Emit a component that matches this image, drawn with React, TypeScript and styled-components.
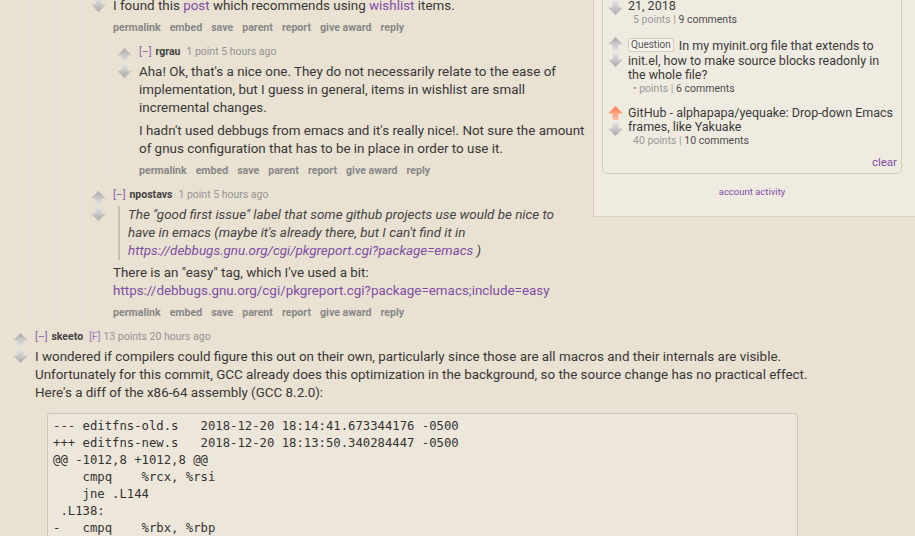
import React from 'react';
import styled, { createGlobalStyle } from 'styled-components';

const SANS = `Roboto, "Noto Sans", "Liberation Sans", sans-serif`;
const MONO = `"DejaVu Sans Mono", "Liberation Mono", monospace`;

const GlobalStyle = createGlobalStyle`
  html, body {
    margin: 0;
    padding: 0;
    background: #e9e1d1;
  }
  body {
    overflow: hidden;
    font-family: ${SANS};
    color: #383838;
  }
`;

type Dir = 'up' | 'down';
type Tone = 'gray' | 'orange';

function Arrow({ dir, tone = 'gray' }: { dir: Dir; tone?: Tone }) {
  const id = `arrow-${dir}-${tone}`;
  const [dark, light] = tone === 'orange' ? ['#ff7d50', '#ffc2aa'] : ['#a9a9a9', '#e4e4e4'];
  const d =
    dir === 'up'
      ? 'M7.5 0 L15 7.5 L10.5 7.5 L10.5 14 L4.5 14 L4.5 7.5 L0 7.5 Z'
      : 'M4.5 0 L10.5 0 L10.5 6.5 L15 6.5 L7.5 14 L0 6.5 L4.5 6.5 Z';
  return (
    <svg width="15" height="14" viewBox="0 0 15 14">
      <defs>
        <linearGradient id={id} x1="0" y1="0" x2="0" y2="1">
          <stop offset="0" stopColor={dir === 'up' ? dark : light} />
          <stop offset="1" stopColor={dir === 'up' ? light : dark} />
        </linearGradient>
      </defs>
      <path d={d} fill={`url(#${id})`} />
    </svg>
  );
}

const Viewport = styled.div`
  height: 536px;
  overflow: hidden;
`;

/* the page is scrolled: the top of the thread sits above the window */
const Scroller = styled.div`
  margin-top: -21px;
`;

const TopRow = styled.div`
  display: flex;
  align-items: flex-start;
`;

const Main = styled.div`
  flex: 1;
  min-width: 0;
  padding-left: 10px;
`;

const Thread = styled.div`
  margin-left: 19px;
  padding-left: 6px;
  border-left: 1px dotted #ddf;
`;

const Child = styled(Thread)`
  margin-top: 10px;
`;

const CommentBox = styled.div`
  & + & {
    margin-top: 10px;
  }
`;

const CommentRow = styled.div`
  display: flex;
`;

const Midcol = styled.div`
  width: 25px;
  flex: 0 0 25px;
  box-sizing: border-box;
  padding: 3px 0 0 3px;
  display: flex;
  flex-direction: column;
  gap: 2px;
`;

const Entry = styled.div`
  flex: 1;
  min-width: 0;
`;

const Tagline = styled.div`
  font-size: 10.5px;
  line-height: 14px;
  color: #959595;
  white-space: nowrap;
`;

const Expand = styled.span`
  color: #8563a6;
  margin-right: 4px;
`;

const Author = styled.span`
  font-weight: 700;
  color: #444;
  margin-right: 6px;
`;

const Flag = styled.span`
  color: #9b80b3;
  margin-right: 3px;
`;

const Md = styled.div`
  margin-top: 4px;
  font-size: 13.4px;
  line-height: 18px;
  max-width: 775px;
`;

const P = styled.p`
  margin: 0;
  white-space: nowrap;
  & + & {
    margin-top: 5px;
  }
`;

const A = styled.a`
  color: #7f4ea6;
  text-decoration: none;
`;

const Quote = styled.blockquote`
  margin: 0 0 4px 5px;
  padding-left: 8px;
  border-left: 2px solid #c9c1b0;
  font-style: italic;
  color: #444;
  white-space: nowrap;
`;

const Pre = styled.pre`
  margin: 11px 12px 0 12px;
  padding: 4px 5px;
  background: #ede6da;
  border: 1px solid #c9c5bd;
  border-radius: 3px;
  font-family: ${MONO};
  font-size: 12.25px;
  line-height: 17px;
  color: #333;
`;

const Actions = styled.ul`
  display: flex;
  gap: 9px;
  list-style: none;
  margin: 6px 0 0;
  padding: 0;
  font-size: 10.6px;
  line-height: 14px;
  font-weight: 700;
  color: #888;
`;

const Sidebar = styled.aside`
  flex: 0 0 322px;
  box-sizing: border-box;
  background: #f0ebe1;
  border-left: 1px solid #d9d0bf;
  border-bottom: 1px solid #d9d0bf;
  padding: 0 13px 17px 8px;
`;

const RecentBox = styled.div`
  border: 1px solid #d6ccba;
  border-radius: 5px;
  padding: 5px 4px 4px 5px;
`;

const Item = styled.div`
  display: flex;
  & + & {
    margin-top: 10px;
  }
`;

const ItemArrows = styled.div`
  flex: 0 0 20px;
  display: flex;
  flex-direction: column;
  gap: 2px;
`;

const ItemBody = styled.div`
  flex: 1;
`;

const ItemTitle = styled.div`
  font-size: 12.5px;
  line-height: 14px;
  color: #3a3a3a;
  white-space: nowrap;
`;

const Flair = styled.span`
  display: inline-block;
  font-size: 10px;
  line-height: 12px;
  padding: 0 2px;
  margin: 1px 5px 2px 0;
  border: 1px solid #d4ccbd;
  border-radius: 2px;
  background: #f7f3ec;
  color: #555;
  vertical-align: 2px;
`;

const ItemMeta = styled.div`
  padding-left: 5px;
  font-size: 10.5px;
  line-height: 14px;
  color: #999;
`;

const Count = styled.span`
  color: #4e4e4e;
`;

const Clear = styled.div`
  margin-top: 7px;
  text-align: right;
  font-size: 11.5px;
  line-height: 14px;
  color: #7f4ea6;
`;

const Activity = styled.div`
  margin-top: 11px;
  text-align: center;
  font-size: 9.5px;
  line-height: 14px;
  color: #7f4ea6;
`;

const SkeetoWrap = styled.div`
  margin-top: 10px;
  padding-left: 10px;
`;

const ACTIONS = ['permalink', 'embed', 'save', 'parent', 'report', 'give award', 'reply'];

function Comment({
  author,
  meta,
  flag,
  children,
  replies,
}: {
  author: string;
  meta: string;
  flag?: string;
  children: React.ReactNode;
  replies?: React.ReactNode;
}) {
  return (
    <CommentBox>
      <CommentRow>
        <Midcol>
          <Arrow dir="up" />
          <Arrow dir="down" />
        </Midcol>
        <Entry>
          <Tagline>
            <Expand>[–]</Expand>
            <Author>{author}</Author>
            {flag && <Flag>{flag}</Flag>}
            {meta}
          </Tagline>
          <Md>{children}</Md>
          <Actions>
            {ACTIONS.map((a) => (
              <li key={a}>{a}</li>
            ))}
          </Actions>
        </Entry>
      </CommentRow>
      {replies && <Child>{replies}</Child>}
    </CommentBox>
  );
}

type Recent = {
  title: React.ReactNode;
  flair?: string;
  points: string;
  comments: string;
  voted?: boolean;
};

const RECENT: Recent[] = [
  {
    title: (
      <>
        Emacs news for the week ending December
        <br />
        21, 2018
      </>
    ),
    points: '5 points',
    comments: '9 comments',
  },
  {
    flair: 'Question',
    title: (
      <>
        In my myinit.org file that extends to
        <br />
        init.el, how to make source blocks readonly in
        <br />
        the whole file?
      </>
    ),
    points: '• points',
    comments: '6 comments',
  },
  {
    title: (
      <>
        GitHub - alphapapa/yequake: Drop-down Emacs
        <br />
        frames, like Yakuake
      </>
    ),
    points: '40 points',
    comments: '10 comments',
    voted: true,
  },
];

export default function App() {
  return (
    <Viewport>
      <GlobalStyle />
      <Scroller>
        <TopRow>
          <Main>
            <Thread>
              <Thread>
                <Thread>
                  <Comment
                    author="npostavs"
                    meta="2 points 6 hours ago"
                    replies={
                      <Comment author="rgrau" meta="1 point 5 hours ago">
                        <P>
                          Aha! Ok, that's a nice one. They do not necessarily relate to the ease of
                          <br />
                          implementation, but I guess in general, items in wishlist are small
                          <br />
                          incremental changes.
                        </P>
                        <P>
                          I hadn't used debbugs from emacs and it's really nice!. Not sure the amount
                          <br />
                          of gnus configuration that has to be in place in order to use it.
                        </P>
                      </Comment>
                    }
                  >
                    <P>
                      I found this <A>post</A> which recommends using <A>wishlist</A> items.
                    </P>
                  </Comment>
                  <Comment author="npostavs" meta="1 point 5 hours ago">
                    <Quote>
                      The "good first issue" label that some github projects use would be nice to
                      <br />
                      have in emacs (maybe it's already there, but I can't find it in
                      <br />
                      <A>https://debbugs.gnu.org/cgi/pkgreport.cgi?package=emacs</A> )
                    </Quote>
                    <P>
                      There is an "easy" tag, which I've used a bit:
                      <br />
                      <A>https://debbugs.gnu.org/cgi/pkgreport.cgi?package=emacs;include=easy</A>
                    </P>
                  </Comment>
                </Thread>
              </Thread>
            </Thread>
          </Main>
          <Sidebar>
            <RecentBox>
              {RECENT.map((r, i) => (
                <Item key={i}>
                  <ItemArrows>
                    <Arrow dir="up" tone={r.voted ? 'orange' : 'gray'} />
                    <Arrow dir="down" />
                  </ItemArrows>
                  <ItemBody>
                    <ItemTitle>
                      {r.flair && <Flair>{r.flair}</Flair>}
                      {r.title}
                    </ItemTitle>
                    <ItemMeta>
                      {r.points} | <Count>{r.comments}</Count>
                    </ItemMeta>
                  </ItemBody>
                </Item>
              ))}
              <Clear>clear</Clear>
            </RecentBox>
            <Activity>account activity</Activity>
          </Sidebar>
        </TopRow>
        <SkeetoWrap>
          <Comment author="skeeto" flag="[F]" meta="13 points 20 hours ago">
            <P>
              I wondered if compilers could figure this out on their own, particularly since those are all macros and
              their internals are visible.
              <br />
              Unfortunately for this commit, GCC already does this optimization in the background, so the source
              change has no practical effect.
              <br />
              Here's a diff of the x86-64 assembly (GCC 8.2.0):
            </P>
            <Pre>
              {`--- editfns-old.s   2018-12-20 18:14:41.673344176 -0500
+++ editfns-new.s   2018-12-20 18:13:50.340284447 -0500
@@ -1012,8 +1012,8 @@
    cmpq    %rcx, %rsi
    jne .L144
 .L138:
-   cmpq    %rbx, %rbp
+   cmpq    %rbp, %rbx
    jne .L139`}
            </Pre>
          </Comment>
        </SkeetoWrap>
      </Scroller>
    </Viewport>
  );
}
